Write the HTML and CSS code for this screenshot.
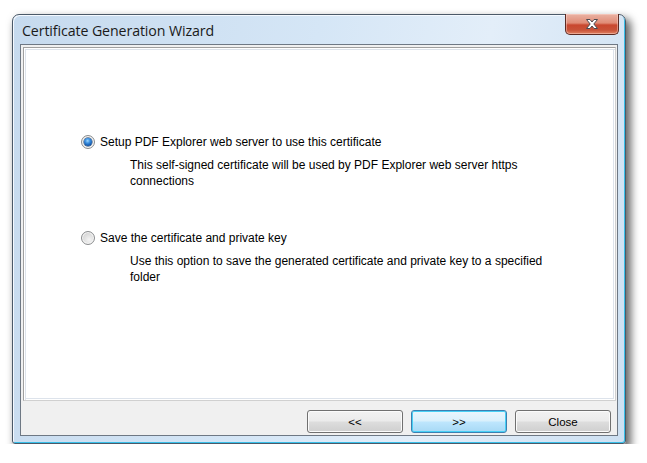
FILE: index.html
```html
<!DOCTYPE html>
<html>
<head>
<meta charset="utf-8">
<title>Certificate Generation Wizard</title>
<link rel="stylesheet" href="styles.css">
</head>
<body>
<div class="window">
  <div class="titlebar">
    <span class="title">Certificate Generation Wizard</span>
    <button class="close" aria-label="Close">
      <svg width="16" height="12" viewBox="0 0 16 12">
        <path d="M2.5 1.5 H6 L8 4 L10 1.5 H13.5 L9.8 6 L13.5 10.5 H10 L8 8 L6 10.5 H2.5 L6.2 6 Z" fill="#ffffff" stroke="#4a4a52" stroke-width="1" stroke-linejoin="round"/>
      </svg>
    </button>
  </div>
  <div class="client">
    <div class="panel">
      <div class="option">
        <span class="radio checked"></span>
        <span class="label">Setup PDF Explorer web server to use this certificate</span>
      </div>
      <div class="desc">This self-signed certificate will be used by PDF Explorer web server https connections</div>
      <div class="option second">
        <span class="radio"></span>
        <span class="label">Save the certificate and private key</span>
      </div>
      <div class="desc">Use this option to save the generated certificate and private key to a specified folder</div>
    </div>
    <div class="footer">
      <button class="btn">&lt;&lt;</button>
      <button class="btn default">&gt;&gt;</button>
      <button class="btn">Close</button>
    </div>
  </div>
</div>
</body>
</html>
```

FILE: styles.css
```css
html, body {
  margin: 0;
  padding: 0;
  background: #ffffff;
}

body {
  padding: 14px 0 0 12px;
  font-family: "Liberation Sans", Arial, sans-serif;
}

.window {
  box-sizing: border-box;
  width: 614px;
  height: 430px;
  border: 1px solid #4b5968;
  border-radius: 7px 7px 3px 3px;
  background: linear-gradient(100deg, #c6daee 0%, #d5e6f6 45%, #e3eef9 70%, #cde0f2 100%);
  box-shadow: inset 1px 1px 0 #f4f9ff, inset -1px -1px 0 #38bfe9, 4px 5px 9px 1px rgba(0, 0, 0, 0.6);
  padding: 0 7px 7px 7px;
  display: flex;
  flex-direction: column;
}

.titlebar {
  height: 29px;
  display: flex;
  align-items: flex-start;
}

.title {
  padding: 7px 0 0 2px;
  font-family: "Open Sans", "Noto Sans", sans-serif;
  font-size: 14.2px;
  color: #1a1a1a;
  line-height: 18px;
  letter-spacing: -0.1px;
}

.close {
  margin: -1px -1px 0 auto;
  width: 54px;
  height: 21px;
  padding: 0;
  border: 1px solid #5c2a22;
  border-top: none;
  border-radius: 0 0 5px 5px;
  background: linear-gradient(#eab3a4 0%, #e08b76 45%, #c9472f 55%, #c85238 80%, #e08262 100%);
  box-shadow: inset 0 0 0 1px rgba(255, 220, 210, 0.45);
  display: flex;
  align-items: center;
  justify-content: center;
}

.close svg {
  display: block;
}

.client {
  flex: 1;
  border: 1px solid #6e7884;
  background: #f0f0f0;
  display: flex;
  flex-direction: column;
}

.panel {
  flex: 1;
  margin: 2px 1px 0 2px;
  border: 1px solid #a0a0a0;
  border-right-color: #d0d0d0;
  border-bottom-color: #d0d0d0;
  background: #ffffff;
  box-shadow: inset 1px 1px 0 #ffffff, inset 2px 2px 0 #dde3eb, inset -1px -1px 0 #ffffff, inset -2px -2px 0 #dde3eb;
  padding: 86px 0 0 57px;
  font-family: "Liberation Sans", Arial, sans-serif;
  font-size: 12px;
  color: #000000;
}

.option {
  display: flex;
  align-items: center;
  height: 16px;
  line-height: 16px;
}

.option.second {
  margin-top: 41px;
}

.label {
  margin-left: 5px;
}

.radio {
  box-sizing: border-box;
  width: 14px;
  height: 14px;
  border-radius: 50%;
  border: 1px solid #8b8d8f;
  background: radial-gradient(circle at 60% 65%, #f4f4f4 0%, #dcdcdc 55%, #c9c9c9 100%);
  box-shadow: inset 0 0 0 1px #f7f7f7;
  position: relative;
}

.radio.checked::after {
  content: "";
  position: absolute;
  left: 2px;
  top: 2px;
  width: 8px;
  height: 8px;
  border-radius: 50%;
  background: radial-gradient(circle at 45% 35%, #9fd8ff 0%, #3a8fe0 35%, #0d4fa3 75%, #0a3b7d 100%);
  box-shadow: 0 0 0 0.5px #1b3f6b;
}

.desc {
  margin: 7px 0 0 49px;
  width: 445px;
  line-height: 16px;
}

.footer {
  height: 34px;
  box-sizing: border-box;
  padding: 9px 6px 0 0;
  display: flex;
  justify-content: flex-end;
  gap: 8px;
}

.btn {
  box-sizing: border-box;
  width: 96px;
  height: 23px;
  padding: 0;
  border: 1px solid #707070;
  border-radius: 3px;
  background: linear-gradient(#f2f2f2 0%, #ebebeb 48%, #dddddd 52%, #cfcfcf 100%);
  box-shadow: inset 0 0 0 1px #fbfbfb;
  font-family: "Liberation Sans", Arial, sans-serif;
  font-size: 11.5px;
  color: #000000;
}

.btn.default {
  border-color: #3c7fb1;
  background: linear-gradient(#eaf6fd 0%, #d9f0fc 48%, #bee6fd 52%, #a7d9f5 100%);
  box-shadow: inset 0 0 0 1px #48d0f5;
}
```
